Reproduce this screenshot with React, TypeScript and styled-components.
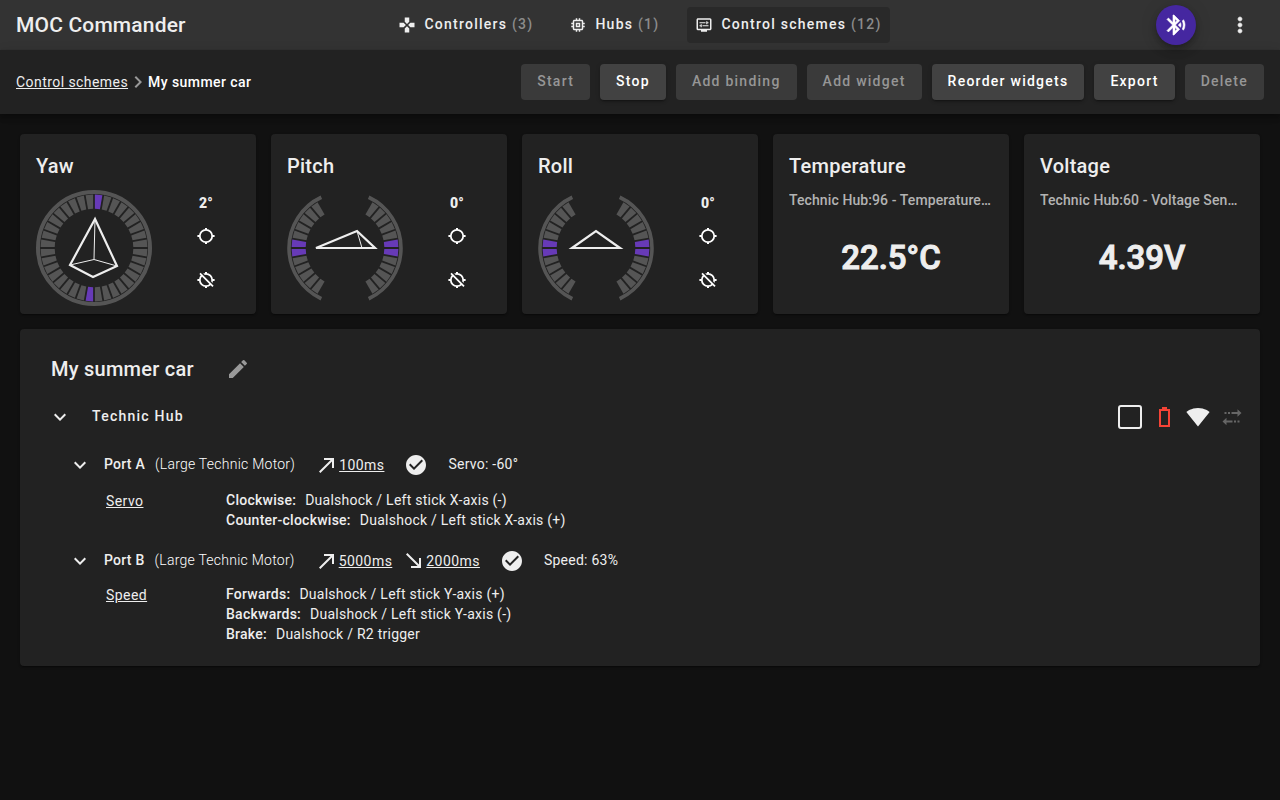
import React from "react";
import styled, { createGlobalStyle, css } from "styled-components";
import {
  MdBluetoothSearching,
  MdCallMade,
  MdCheckCircle,
  MdChevronRight,
  MdEdit,
  MdExpandMore,
  MdGamepad,
  MdMemory,
  MdMoreVert,
  MdOutlineDisplaySettings,
  MdSignalWifi4Bar,
} from "react-icons/md";

const GlobalStyle = createGlobalStyle`
  *, *::before, *::after { box-sizing: border-box; }
  body {
    margin: 0;
    min-height: 100vh;
    background: #111;
    color: #eee;
    font: 400 14px/20px Roboto, "Liberation Sans", sans-serif;
    letter-spacing: 0.0178em;
  }
  h1, h2, h3, p, ul, dl, dd { margin: 0; padding: 0; }
  button { font: inherit; color: inherit; border: 0; padding: 0; background: none; cursor: pointer; }
  a { color: inherit; letter-spacing: 0.03125em; }
  svg { display: block; flex: none; }
`;

const titleText = css`
  font-size: 20px;
  line-height: 32px;
  font-weight: 500;
  letter-spacing: 0.0125em;
`;

const buttonText = css`
  font-weight: 500;
  letter-spacing: 0.0893em;
  text-decoration: none;
  white-space: nowrap;
`;

const heavyIcon = css`
  path:not([fill="none"]) {
    stroke: currentColor;
    stroke-width: 0.6px;
  }
`;

const TopBar = styled.header`
  display: grid;
  grid-template-columns: 1fr auto 1fr;
  align-items: center;
  height: 50px;
  padding: 0 16px;
  background: #333;
`;

const Brand = styled.h1`
  ${titleText}
  font-size: 21px;
  letter-spacing: 0.008em;
`;

const Nav = styled.nav`
  display: flex;
  gap: 20px;
`;

const NavLink = styled.a<{ $active?: boolean }>`
  ${buttonText}
  display: flex;
  align-items: center;
  gap: 8px;
  height: 36px;
  padding: 0 8px;
  border-radius: 4px;
  background: ${(p) => (p.$active ? "#292929" : "transparent")};
`;

const NavLabel = styled.span`
  padding-bottom: 2px;
`;

const Count = styled.span`
  color: #8c8c8c;
`;

const TopActions = styled.div`
  display: flex;
  align-items: center;
  justify-content: flex-end;
  gap: 20px;
`;

const ScanButton = styled.button`
  ${heavyIcon}
  display: grid;
  place-items: center;
  width: 40px;
  height: 40px;
  border-radius: 50%;
  background: #4527a0;
  color: #fff;
  box-shadow: 0 3px 5px -1px rgba(0, 0, 0, 0.2), 0 6px 10px rgba(0, 0, 0, 0.14), 0 1px 18px rgba(0, 0, 0, 0.12);
`;

const MenuButton = styled.button`
  ${heavyIcon}
  display: grid;
  place-items: center;
  width: 48px;
  height: 48px;
`;

const ToolBar = styled.div`
  display: flex;
  align-items: center;
  justify-content: space-between;
  min-height: 64px;
  padding: 0 16px;
  background: #222;
  box-shadow: 0 2px 4px -1px rgba(0, 0, 0, 0.2), 0 4px 5px rgba(0, 0, 0, 0.14), 0 1px 10px rgba(0, 0, 0, 0.12);
`;

const Breadcrumb = styled.nav`
  display: flex;
  align-items: center;
  letter-spacing: 0.03125em;
`;

const BreadcrumbArrow = styled(MdChevronRight)`
  margin: 0 -2px;
  color: #999;
`;

const Current = styled.span`
  font-weight: 500;
  color: #fff;
`;

const ToolButtons = styled.div`
  display: flex;
  gap: 10px;
`;

const ToolButton = styled.button`
  ${buttonText}
  height: 36px;
  padding: 0 16px 2px;
  border-radius: 4px;
  background: #424242;
  color: #fff;
  box-shadow: 0 3px 1px -2px rgba(0, 0, 0, 0.2), 0 2px 2px rgba(0, 0, 0, 0.14), 0 1px 5px rgba(0, 0, 0, 0.12);

  &:disabled {
    background: #3a3a3a;
    color: #969696;
    box-shadow: none;
    cursor: default;
  }
`;

const Main = styled.main`
  display: flex;
  flex-direction: column;
  gap: 15px;
  padding: 20px;
`;

const Widgets = styled.div`
  display: grid;
  grid-template-columns: repeat(5, minmax(0, 1fr));
  gap: 15px;
`;

const surface = css`
  background: #222;
  border-radius: 4px;
  box-shadow: 0 2px 1px -1px rgba(0, 0, 0, 0.2), 0 1px 1px rgba(0, 0, 0, 0.14), 0 1px 3px rgba(0, 0, 0, 0.12);
`;

const Card = styled.section`
  ${surface}
  display: flex;
  flex-direction: column;
  height: 180px;
  padding: 16px 16px 8px;
`;

const CardTitle = styled.h2`
  ${titleText}
`;

const CardSubtitle = styled.p`
  margin-top: 8px;
  font-weight: 500;
  letter-spacing: 0.007em;
  color: #b3b3b3;
  overflow: hidden;
  text-overflow: ellipsis;
  white-space: nowrap;
`;

const Reading = styled.p`
  flex: 1;
  display: grid;
  place-items: center;
  font-size: 33px;
  line-height: 40px;
  font-weight: 500;
  letter-spacing: 0;
  -webkit-text-stroke: 1px currentColor;
`;

const TiltBody = styled.div`
  display: flex;
  margin-top: 8px;
`;

const TiltControls = styled.div`
  flex: 1;
  display: flex;
  flex-direction: column;
  align-items: center;
  padding-left: 20px;
`;

const Angle = styled.p`
  margin: 3px 0;
  font-weight: 900;
`;

const IconButton = styled.button<{ $size?: number; $muted?: boolean }>`
  display: grid;
  place-items: center;
  width: ${(p) => p.$size ?? 24}px;
  height: ${(p) => p.$size ?? 24}px;
  color: ${(p) => (p.$muted ? "#999" : "inherit")};
`;

const TiltButtons = styled.div`
  display: flex;
  flex-direction: column;
  gap: 4px;
`;

const Panel = styled.section`
  ${surface}
  padding: 16px 16px 22px;
`;

const PanelHeader = styled.div`
  display: flex;
  align-items: center;
  gap: 20px;
  height: 48px;
  padding-left: 15px;
`;

const HubRow = styled.div`
  display: flex;
  align-items: center;
  justify-content: space-between;
  height: 48px;
  padding-left: 12px;
`;

const HubHeading = styled.div`
  display: flex;
  align-items: center;
  gap: 20px;
`;

const HubName = styled.h3`
  ${buttonText}
  font-size: 14px;
  padding-bottom: 2px;
`;

const HubStatus = styled.div`
  display: flex;
  align-items: center;
  gap: 10px;
`;

const HubCheck = styled.input`
  appearance: none;
  width: 24px;
  height: 24px;
  margin: 0;
  border: 2px solid #eee;
  border-radius: 3px;

  &:checked {
    background: #eee;
  }
`;

const Ports = styled.div`
  display: flex;
  flex-direction: column;
  gap: 17px;
  padding: 12px 0 0 32px;
`;

const PortHeader = styled.div`
  display: flex;
  align-items: center;
  height: 24px;
`;

const PortName = styled.span`
  padding: 0 10px 2px 12px;
  font-weight: 500;
`;

const PortType = styled.span`
  padding-bottom: 2px;
  font-weight: 300;
  color: #fff;
`;

const Ramps = styled.div`
  display: flex;
  gap: 10px;
  margin: 0 20px;
`;

const RampLink = styled.a`
  display: flex;
  align-items: center;
`;

const DownArrow = styled(MdCallMade)`
  transform: rotate(90deg);
`;

const PortValue = styled.span`
  padding: 0 0 2px 20px;
`;

const Binding = styled.div`
  display: flex;
  align-items: center;
  min-height: 44px;
  margin: 11px 0 0 38px;
`;

const BindingInner = styled.div`
  display: grid;
  grid-template-columns: 120px auto;
  align-items: start;
`;

const BindingLink = styled.a`
  padding-top: 1px;
`;

const Input = styled.div`
  display: flex;
  gap: 9px;
`;

const InputName = styled.dt`
  font-weight: 500;
`;

const rad = (deg: number) => (deg * Math.PI) / 180;

const point = (radius: number, deg: number) =>
  `${(radius * Math.sin(rad(deg))).toFixed(2)} ${(-radius * Math.cos(rad(deg))).toFixed(2)}`;

const arc = (from: number, to: number) => `M${point(56, from)}A56 56 0 0 1 ${point(56, to)}`;

const INNER = 39.3;
const OUTER = 53.4;
const edge = (radius: number, side: number, deg: number) => {
  const x = 0.9 * side;
  return point(radius, deg + (Math.asin(x / radius) * 180) / Math.PI);
};
const segmentPath = `M${edge(INNER, 1, 0)}L${edge(OUTER, 1, 0)}L${edge(OUTER, -1, 10)}L${edge(INNER, -1, 10)}Z`;

function Gauge({
  label,
  full,
  active,
  children,
}: {
  label: string;
  full?: boolean;
  active: number[];
  children: React.ReactNode;
}) {
  const all = Array.from({ length: 36 }, (_, i) => i * 10);
  const shown = full ? all : all.filter((a) => (a >= 30 && a < 150) || (a >= 210 && a < 330));
  return (
    <svg width="116" height="116" viewBox="-58 -58 116 116" role="img" aria-label={label}>
      {full ? (
        <circle r="56" fill="none" stroke="#555" strokeWidth="4" />
      ) : (
        <path d={arc(25, 155) + arc(205, 335)} fill="none" stroke="#555" strokeWidth="3.6" />
      )}
      {shown.map((a) => (
        <path key={a} d={segmentPath} transform={`rotate(${a})`} fill={active.includes(a) ? "#673ab7" : "#555"} />
      ))}
      <g fill="none" stroke="#eee" strokeWidth="2.2">
        {children}
      </g>
    </svg>
  );
}

function Reticle({ off }: { off?: boolean }) {
  return (
    <svg width="20" height="20" viewBox="0 0 20 20" fill="none" stroke="#fff" strokeWidth="1.8">
      <circle cx="10" cy="10" r="6.2" />
      <path d="M10 2v2M10 16v2M1.4 10H4M16 10h2.6" strokeWidth="2" />
      {off && (
        <>
          <path d="M5 2.4L18 15.4" stroke="#222" strokeWidth="1.6" />
          <path d="M4 3.4L17 16.4" />
        </>
      )}
    </svg>
  );
}

function TiltCard({
  title,
  angle,
  full,
  active,
  children,
}: {
  title: string;
  angle: string;
  full?: boolean;
  active: number[];
  children: React.ReactNode;
}) {
  return (
    <Card>
      <CardTitle>{title}</CardTitle>
      <TiltBody>
        <Gauge label={`${title} ${angle}`} full={full} active={active}>
          {children}
        </Gauge>
        <TiltControls>
          <Angle>{angle}</Angle>
          <TiltButtons>
            <IconButton $size={40} aria-label="Set zero">
              <Reticle />
            </IconButton>
            <IconButton $size={40} aria-label="Reset zero">
              <Reticle off />
            </IconButton>
          </TiltButtons>
        </TiltControls>
      </TiltBody>
    </Card>
  );
}

function ReadingCard({ title, source, value }: { title: string; source: string; value: string }) {
  return (
    <Card>
      <CardTitle>{title}</CardTitle>
      <CardSubtitle>{source}</CardSubtitle>
      <Reading>{value}</Reading>
    </Card>
  );
}

function BatteryEmpty() {
  return (
    <svg width="24" height="24" viewBox="0 0 24 24" fill="none" stroke="#f44336" role="img" aria-label="Battery empty">
      <path d="M8 5h9v16H8z" strokeWidth="2" />
      <path d="M10 3h5" strokeWidth="2" />
    </svg>
  );
}

function Transfer() {
  return (
    <svg width="24" height="24" viewBox="0 0 24 24" fill="#666" role="img" aria-label="Transfer">
      <path d="M4.5 7h2v2h-2zM8 7h2v2H8zM11.5 7h6V4.2L21.5 8l-4 3.8V9h-6z" />
      <path d="M17.5 15.5h2v2h-2zM14 15.5h2v2h-2zM12.5 15.5h-6v-2.8l-4 3.8 4 3.8v-2.8h6z" />
    </svg>
  );
}

type PortProps = {
  name: string;
  device: string;
  up: string;
  down?: string;
  value: string;
  binding: string;
  inputs: [string, string][];
};

function Port({ name, device, up, down, value, binding, inputs }: PortProps) {
  return (
    <div>
      <PortHeader>
        <IconButton aria-label={`Collapse ${name}`}>
          <MdExpandMore size={24} />
        </IconButton>
        <PortName>{name}</PortName>
        <PortType>({device})</PortType>
        <Ramps>
          <RampLink href="#up">
            <MdCallMade size={24} />
            {up}
          </RampLink>
          {down && (
            <RampLink href="#down">
              <DownArrow size={24} />
              {down}
            </RampLink>
          )}
        </Ramps>
        <MdCheckCircle size={24} />
        <PortValue>{value}</PortValue>
      </PortHeader>
      <Binding>
        <BindingInner>
          <BindingLink href="#binding">{binding}</BindingLink>
          <dl>
            {inputs.map(([label, source]) => (
              <Input key={label}>
                <InputName>{label}:</InputName>
                <dd>{source}</dd>
              </Input>
            ))}
          </dl>
        </BindingInner>
      </Binding>
    </div>
  );
}

const tools: [string, boolean][] = [
  ["Start", false],
  ["Stop", true],
  ["Add binding", false],
  ["Add widget", false],
  ["Reorder widgets", true],
  ["Export", true],
  ["Delete", false],
];

export default function App() {
  return (
    <>
      <GlobalStyle />
      <TopBar>
        <Brand>MOC Commander</Brand>
        <Nav>
          <NavLink href="#controllers">
            <MdGamepad size={18} />
            <NavLabel>
              Controllers <Count>(3)</Count>
            </NavLabel>
          </NavLink>
          <NavLink href="#hubs">
            <MdMemory size={18} />
            <NavLabel>
              Hubs <Count>(1)</Count>
            </NavLabel>
          </NavLink>
          <NavLink href="#schemes" $active>
            <MdOutlineDisplaySettings size={18} />
            <NavLabel>
              Control schemes <Count>(12)</Count>
            </NavLabel>
          </NavLink>
        </Nav>
        <TopActions>
          <ScanButton aria-label="Scan for hubs">
            <MdBluetoothSearching size={24} />
          </ScanButton>
          <MenuButton aria-label="Menu">
            <MdMoreVert size={24} />
          </MenuButton>
        </TopActions>
      </TopBar>
      <ToolBar>
        <Breadcrumb>
          <a href="#schemes">Control schemes</a>
          <BreadcrumbArrow size={24} />
          <Current>My summer car</Current>
        </Breadcrumb>
        <ToolButtons>
          {tools.map(([label, enabled]) => (
            <ToolButton key={label} disabled={!enabled}>
              {label}
            </ToolButton>
          ))}
        </ToolButtons>
      </ToolBar>
      <Main>
        <Widgets>
          <TiltCard title="Yaw" angle="2°" full active={[0, 180]}>
            <path d="M1 -29L-24 17L-1 29L23 18Z" />
            <path d="M1 -29L0 11.5M-24 17L0 11.5L23 18" strokeWidth="1" />
          </TiltCard>
          <TiltCard title="Pitch" angle="0°" active={[80, 90, 260, 270]}>
            <path d="M-29 0L12 -17L30 0Z" />
            <path d="M12 -17L17 0" strokeWidth="1" />
          </TiltCard>
          <TiltCard title="Roll" angle="0°" active={[80, 90, 260, 270]}>
            <path d="M-24 0L0 -17L24 0Z" />
          </TiltCard>
          <ReadingCard title="Temperature" source="Technic Hub:96 - Temperature Sensor" value="22.5°C" />
          <ReadingCard title="Voltage" source="Technic Hub:60 - Voltage Sensor" value="4.39V" />
        </Widgets>
        <Panel>
          <PanelHeader>
            <CardTitle>My summer car</CardTitle>
            <IconButton $size={48} $muted aria-label="Rename">
              <MdEdit size={24} />
            </IconButton>
          </PanelHeader>
          <HubRow>
            <HubHeading>
              <IconButton aria-label="Collapse Technic Hub">
                <MdExpandMore size={24} />
              </IconButton>
              <HubName>Technic Hub</HubName>
            </HubHeading>
            <HubStatus>
              <HubCheck type="checkbox" aria-label="Hub light" />
              <BatteryEmpty />
              <MdSignalWifi4Bar size={24} />
              <Transfer />
            </HubStatus>
          </HubRow>
          <Ports>
            <Port
              name="Port A"
              device="Large Technic Motor"
              up="100ms"
              value="Servo: -60°"
              binding="Servo"
              inputs={[
                ["Clockwise", "Dualshock / Left stick X-axis (-)"],
                ["Counter-clockwise", "Dualshock / Left stick X-axis (+)"],
              ]}
            />
            <Port
              name="Port B"
              device="Large Technic Motor"
              up="5000ms"
              down="2000ms"
              value="Speed: 63%"
              binding="Speed"
              inputs={[
                ["Forwards", "Dualshock / Left stick Y-axis (+)"],
                ["Backwards", "Dualshock / Left stick Y-axis (-)"],
                ["Brake", "Dualshock / R2 trigger"],
              ]}
            />
          </Ports>
        </Panel>
      </Main>
    </>
  );
}
